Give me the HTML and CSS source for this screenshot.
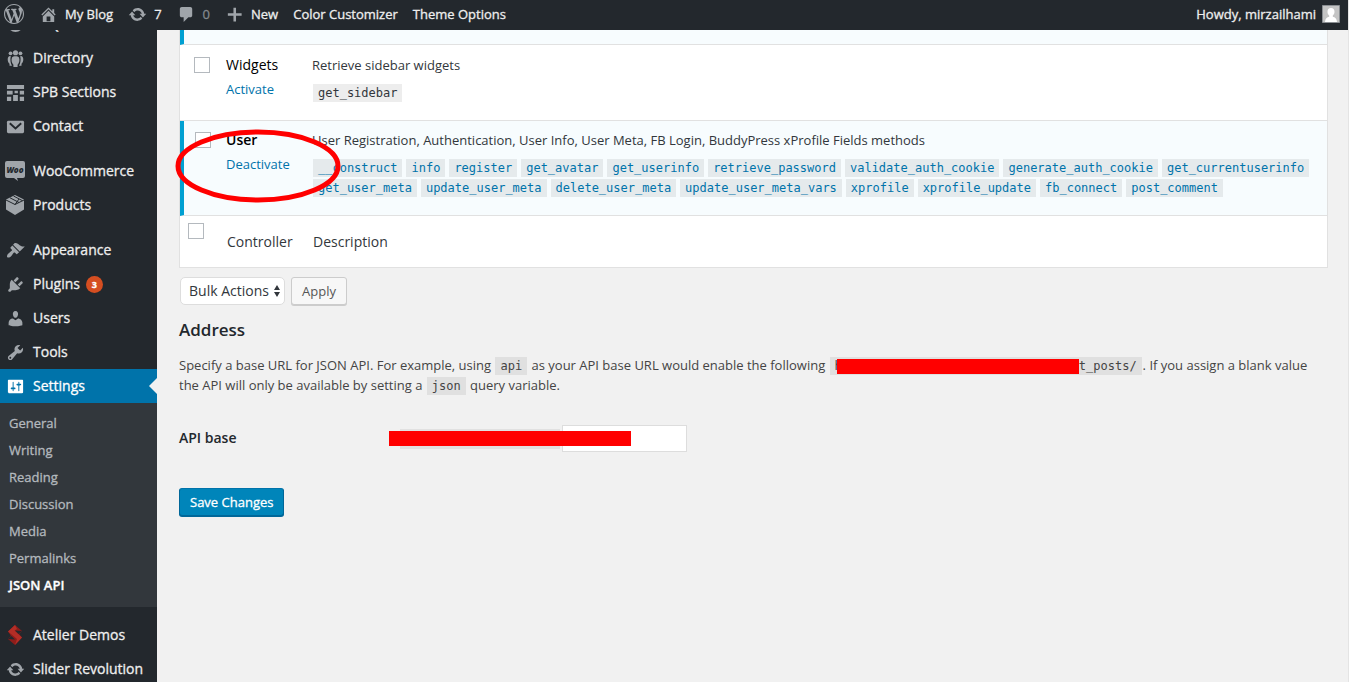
FILE: index.html
```html
<!DOCTYPE html>
<html lang="en">
<head>
<meta charset="utf-8">
<title>JSON API Settings</title>
<link rel="stylesheet" href="styles.css">
</head>
<body>
<header class="adminbar">
  <nav class="bar-left" aria-label="Toolbar">
    <a class="bar-logo" href="#" aria-label="About WordPress"><svg class="icon icon-lg" viewBox="0 0 20 20"><path d="M20 10c0-5.51-4.49-10-10-10C4.48 0 0 4.49 0 10c0 5.52 4.48 10 10 10 5.51 0 10-4.48 10-10zM7.78 15.37L4.37 6.22c.55-.02 1.17-.08 1.17-.08.5-.06.44-1.13-.06-1.11 0 0-1.45.11-2.37.11-.18 0-.37 0-.58-.01C4.12 2.69 6.87 1.11 10 1.11c2.33 0 4.45.87 6.05 2.34-.68-.11-1.65.39-1.65 1.58 0 .74.45 1.36.9 2.1.35.61.55 1.36.55 2.46 0 1.49-1.4 5-1.4 5l-3.03-8.37c.54-.02.82-.17.82-.17.5-.05.44-1.25-.06-1.22 0 0-1.44.12-2.38.12-.87 0-2.33-.12-2.33-.12-.5-.03-.56 1.2-.06 1.22l.92.08 1.26 3.41zM17.41 10c.24-.64.74-1.87.43-4.25.7 1.29 1.05 2.71 1.05 4.25 0 3.29-1.73 6.24-4.4 7.78.97-2.59 1.94-5.2 2.92-7.78zM6.1 18.09C3.12 16.65 1.11 13.53 1.11 10c0-1.3.23-2.48.72-3.59C3.25 10.3 4.67 14.2 6.1 18.09zm4.03-6.63l2.58 6.98c-.86.29-1.76.45-2.71.45-.79 0-1.57-.11-2.29-.33.81-2.38 1.62-4.74 2.42-7.1z"/></svg></a>
    <a class="bar-item" href="#"><svg class="icon" viewBox="0 0 20 20"><path d="M16 8.5l1.53 1.53-1.06 1.06L10 4.6l-6.47 6.49-1.06-1.06L10 2.5l4 4v-2h2v4zm-6-2.46l6 5.99V18H4v-5.97zM12 17v-5H8v5h4z"/></svg>My Blog</a>
    <a class="bar-item" href="#"><svg class="icon" viewBox="0 0 20 20"><path d="M10.2 3.28c3.53 0 6.43 2.61 6.92 6h2.08l-3.5 4-3.5-4h2.32c-.45-1.97-2.21-3.45-4.32-3.45-1.45 0-2.73.71-3.54 1.78L4.95 5.66C6.23 4.2 8.11 3.28 10.2 3.28zm-.4 13.44c-3.52 0-6.43-2.61-6.92-6H.8l3.5-4c1.17 1.33 2.33 2.67 3.5 4H5.48c.45 1.97 2.21 3.45 4.32 3.45 1.45 0 2.73-.71 3.54-1.78l1.71 1.95c-1.28 1.46-3.15 2.38-5.25 2.38z"/></svg>7</a>
    <a class="bar-item bar-muted" href="#"><svg class="icon" viewBox="0 0 20 20"><path d="M5 2h9c1.1 0 2 .9 2 2v7c0 1.1-.9 2-2 2h-2l-5 5v-5H5c-1.1 0-2-.9-2-2V4c0-1.1.9-2 2-2z"/></svg>0</a>
    <a class="bar-item" href="#"><svg class="icon" viewBox="0 0 20 20"><path d="M17.5 8.8v2.6h-5.9v5.9H8.900v-5.900H3V8.800h5.900V2.900h2.700v5.900z"/></svg>New</a>
    <a class="bar-item" href="#">Color Customizer</a>
    <a class="bar-item" href="#">Theme Options</a>
  </nav>
  <a class="bar-account" href="#">Howdy, mirzailhami
    <svg class="avatar" viewBox="0 0 18 18"><path fill="#c4c4c4" stroke="#8a8e92" d="M.5.5h17v17H.5z"/><path fill="#fff" d="M9 3c2.300 0 3.500 1.500 3.500 3.800 0 1.700-.7 3-1.700 3.800v1.200c2.200.4 4 1.700 4.200 5.200H3c.2-3.500 2-4.800 4.200-5.200v-1.200c-1-.8-1.700-2.100-1.700-3.800C5.500 4.500 6.700 3 9 3z"/></svg>
  </a>
</header>

<div class="layout">
  <nav class="sidebar" aria-label="Main menu">
    <ul class="menu">
      <li><a class="menu-link" href="#"><svg class="icon" viewBox="0 0 20 20"><circle cx="10" cy="10" r="8"/></svg>FAQs</a></li>
      <li><a class="menu-link" href="#"><svg class="icon" viewBox="0 0 20 20"><circle cx="10" cy="4" r="2.700"/><circle cx="4.800" cy="4.500" r="2"/><circle cx="15.200" cy="4.500" r="2"/><path d="M6.300 9C7.300 7 12.700 7 13.700 9c1 3 .2 6-1.500 7.500V19H7.800v-2.500C6.100 15 5.300 12 6.300 9zM5 7.500C3 7 1.800 8.500 1.800 11c0 2 .8 3.500 1.900 4.500V17.500H6.300C4.700 15 4.200 10.800 5 7.500zM15 7.500c2-.5 3.200 1 3.200 3.500 0 2-.8 3.500-1.900 4.500v2h-2.600c1.600-2.500 2.100-6.700 1.300-10z"/></svg>Directory</a></li>
      <li><a class="menu-link" href="#"><svg class="icon" viewBox="0 0 20 20"><path d="M1 2h18v4.200H1zM1 8.200h6v4H1zM9 8.200h3.500v2.500H9zM14.500 8.200H19v4h-4.500zM1 14.500h4.500V19H1zM7.500 12.700h5V19h-5zM14.500 14.500H19V19h-4.500z"/></svg>SPB Sections</a></li>
      <li><a class="menu-link" href="#"><svg class="icon" viewBox="0 0 20 20"><rect x="1" y="4" width="18" height="13" rx="1.500"/><path class="cut-line" stroke-width="2" d="M4 6.500l6 5.500 6-5.500"/></svg>Contact</a></li>
      <li class="group-start"><a class="menu-link" href="#"><svg class="icon icon-lg" viewBox="0 0 20 20"><path d="M2 0h16q2 0 2 2v13q0 2-2 2h-6l1 3-4-3H2q-2 0-2-2V2q0-2 2-2z"/><text class="woo-text" x="10" y="11.500" text-anchor="middle">Woo</text></svg>WooCommerce</a></li>
      <li><a class="menu-link" href="#"><svg class="icon icon-lg" viewBox="0 0 20 20"><path d="M10 0l9 4.500v10L10 20l-9-5.500v-10z"/><path class="cut-line" stroke-width="1" d="M1 5l9 4.500L19 5M5 2.800l9 4.700M8.500 1l9 4.700M10 9.500L14 4"/></svg>Products</a></li>
      <li class="group-start"><a class="menu-link" href="#"><svg class="icon" viewBox="0 0 20 20"><path d="M14.480 11.060L7.410 3.990l1.500-1.500c.5-.56 2.300-.47 3.510.32 1.210.8 1.430 1.280 2.910 2.100 1.180.64 2.450 1.260 4.450.85zm-.71.71L6.700 4.700 4.930 6.470c-.39.39-.39 1.020 0 1.410l1.060 1.060c.39.39.39 1.030 0 1.420-.6.6-1.430 1.110-2.210 1.690-.35.26-.7.53-1.010.84C1.430 14.230.4 16.080 1.400 17.070c.99 1 2.840-.03 4.180-1.360.31-.31.58-.66.85-1.020.57-.78 1.080-1.610 1.690-2.210.39-.39 1.020-.39 1.410 0l1.060 1.060c.39.39 1.020.39 1.410 0z"/></svg>Appearance</a></li>
      <li><a class="menu-link" href="#"><svg class="icon" viewBox="0 0 20 20"><path d="M13.110 4.360L9.870 7.600 8 5.730l3.240-3.240c.35-.34 1.050-.2 1.560.32.52.51.66 1.210.31 1.550zm-8 1.770l.91-1.120 9.010 9.010-1.190.84c-.71.71-2.630 1.160-3.820 1.160H6.140L4.900 17.260c-.59.59-1.540.59-2.120 0-.59-.58-.59-1.530 0-2.120l1.240-1.240v-3.880c0-1.130.4-3.190 1.090-3.890zm7.260 3.970l3.240-3.240c.34-.35 1.040-.21 1.550.31.52.51.66 1.210.31 1.550l-3.240 3.250z"/></svg>Plugins<span class="badge">3</span></a></li>
      <li><a class="menu-link" href="#"><svg class="icon" viewBox="0 0 20 20"><path d="M10 9.250c-2.270 0-2.730-3.440-2.730-3.440C7 4.020 7.820 2 9.970 2c2.160 0 2.980 2.020 2.710 3.810 0 0-.41 3.440-2.680 3.440zm0 2.570L12.720 10c2.390 0 4.520 2.330 4.520 4.530v2.490s-3.650 1.130-7.240 1.130c-3.650 0-7.240-1.130-7.240-1.130v-2.490c0-2.250 1.940-4.480 4.470-4.480z"/></svg>Users</a></li>
      <li><a class="menu-link" href="#"><svg class="icon" viewBox="0 0 20 20"><path d="M16.680 9.770c-1.340 1.340-3.300 1.670-4.950.99l-5.410 6.520c-.99.99-2.590.99-3.580 0s-.99-2.590 0-3.570l6.520-5.420c-.68-1.650-.35-3.610.99-4.950 1.280-1.280 3.120-1.620 4.720-1.060l-2.890 2.890 2.820 2.820 2.860-2.870c.53 1.580.18 3.390-1.080 4.650zM3.810 16.210c.4.39 1.040.39 1.430 0 .4-.4.4-1.040 0-1.430-.39-.4-1.030-.4-1.430 0-.39.39-.39 1.030 0 1.430z"/></svg>Tools</a></li>
      <li>
        <a class="menu-link current" href="#"><svg class="icon" viewBox="0 0 20 20"><path d="M18 16V4c0-.55-.45-1-1-1H3c-.55 0-1 .45-1 1v12c0 .55.45 1 1 1h14c.55 0 1-.45 1-1zM8 11h1c.55 0 1 .45 1 1s-.45 1-1 1H8v1.500c0 .28-.22.5-.5.5s-.5-.22-.5-.5V13H6c-.55 0-1-.45-1-1s.45-1 1-1h1V5.500c0-.28.22-.5.5-.5s.5.22.5.5V11zm5-2h-1c-.55 0-1-.45-1-1s.45-1 1-1h1V5.500c0-.28.22-.5.5-.5s.5.22.5.5V7h1c.55 0 1 .45 1 1s-.45 1-1 1h-1v5.500c0 .28-.22.5-.5.5s-.5-.22-.5-.5V9z"/></svg>Settings</a>
        <ul class="submenu">
          <li><a href="#">General</a></li>
          <li><a href="#">Writing</a></li>
          <li><a href="#">Reading</a></li>
          <li><a href="#">Discussion</a></li>
          <li><a href="#">Media</a></li>
          <li><a href="#">Permalinks</a></li>
          <li><a class="selected" href="#">JSON API</a></li>
        </ul>
      </li>
      <li class="group-start"><a class="menu-link" href="#"><svg class="icon icon-lg" viewBox="0 0 20 20"><path fill="#8c1d1a" d="M3 6.500L10 0l7 6-3 3 3 3.500L10 20l-7-6 3-3z"/><path fill="#b32d26" d="M10 0L3 6.500 12 14l-2 6 7-7.500-7.500-7L12 4z"/><path fill="#23282d" d="M10 5.500L17 6l-3.500 3zM10 14.500L3 14l3.500-3z"/></svg>Atelier Demos</a></li>
      <li><a class="menu-link" href="#"><svg class="icon" viewBox="0 0 20 20"><path d="M10.200 3.280c3.530 0 6.430 2.610 6.920 6h2.080l-3.500 4-3.500-4h2.320c-.45-1.970-2.210-3.450-4.320-3.450-1.450 0-2.730.71-3.540 1.780L4.950 5.660C6.230 4.200 8.110 3.280 10.200 3.280zm-.4 13.440c-3.520 0-6.430-2.610-6.920-6H.8l3.500-4c1.170 1.330 2.330 2.670 3.500 4H5.480c.45 1.970 2.210 3.450 4.320 3.450 1.450 0 2.730-.71 3.540-1.780l1.710 1.950c-1.280 1.460-3.150 2.380-5.250 2.380z"/></svg>Slider Revolution</a></li>
    </ul>
  </nav>

  <main class="content">
    <div class="table-wrap">
      <table class="controllers">
        <tbody>
          <tr class="active previous"><td class="check"></td><td class="name"></td><td></td></tr>
          <tr>
            <td class="check"><input type="checkbox" aria-label="Select Widgets"></td>
            <td class="name"><span class="title">Widgets</span><a href="#">Activate</a></td>
            <td class="desc"><p>Retrieve sidebar widgets</p><div class="methods"><code>get_sidebar</code></div></td>
          </tr>
          <tr class="active">
            <td class="check"><input type="checkbox" aria-label="Select User"></td>
            <td class="name"><strong class="title">User</strong><a href="#">Deactivate</a></td>
            <td class="desc"><p>User Registration, Authentication, User Info, User Meta, FB Login, BuddyPress xProfile Fields methods</p>
              <div class="methods"><a href="#"><code>__construct</code></a><a href="#"><code>info</code></a><a href="#"><code>register</code></a><a href="#"><code>get_avatar</code></a><a href="#"><code>get_userinfo</code></a><a href="#"><code>retrieve_password</code></a><a href="#"><code>validate_auth_cookie</code></a><a href="#"><code>generate_auth_cookie</code></a><a href="#"><code>get_currentuserinfo</code></a><a href="#"><code>get_user_meta</code></a><a href="#"><code>update_user_meta</code></a><a href="#"><code>delete_user_meta</code></a><a href="#"><code>update_user_meta_vars</code></a><a href="#"><code>xprofile</code></a><a href="#"><code>xprofile_update</code></a><a href="#"><code>fb_connect</code></a><a href="#"><code>post_comment</code></a></div></td>
          </tr>
        </tbody>
        <tfoot>
          <tr>
            <td class="check"><input type="checkbox" aria-label="Select all"></td>
            <th scope="col" class="name">Controller</th>
            <th scope="col" class="desc">Description</th>
          </tr>
        </tfoot>
      </table>
      <svg class="annotation" viewBox="0 0 166 74" aria-hidden="true"><ellipse cx="83" cy="37" rx="80" ry="34"/></svg>
    </div>

    <form class="settings">
      <div class="bulk">
        <span class="select-wrap">
          <select class="select" aria-label="Bulk action"><option>Bulk Actions</option></select>
          <svg class="select-arrows" viewBox="0 0 6 14" aria-hidden="true"><path d="M3 1l3 5H0zM3 13L0 8h6z"/></svg>
        </span>
        <button class="button" type="button">Apply</button>
      </div>
      <h2 class="heading">Address</h2>
      <p class="help">Specify a base URL for JSON API. For example, using <code>api</code> as your API base URL would enable the following <code>h<span class="redacted"></span>t_posts/</code>. If you assign a blank value the API will only be available by setting a <code>json</code> query variable.</p>
      <div class="field">
        <label class="field-label" for="api-base">API base</label>
        <div class="field-control">
          <span class="url-prefix"></span>
          <input class="text-input" id="api-base" type="text">
          <span class="redacted field-redacted"></span>
        </div>
      </div>
      <button class="button primary" type="submit">Save Changes</button>
    </form>
  </main>
</div>
</body>
</html>
```
FILE: styles.css
```css
* { box-sizing: border-box; }

body {
  margin: 0;
  height: 100vh;
  overflow: hidden;
  display: flex;
  flex-direction: column;
  border-right: 1px solid #e4e4e4;
  background: #f1f1f1;
  color: #444;
  font: 13px/20px "Open Sans", sans-serif;
}

a { color: #0073aa; text-decoration: none; }
ul { margin: 0; padding: 0; list-style: none; }
p { margin: 0; }

.icon { width: 19px; height: 19px; flex: none; fill: #a0a5aa; }
.icon-lg { width: 20px; height: 20px; }
.cut-line { fill: none; stroke: #23282d; }
.woo-text { fill: #23282d; font: italic 800 8px "Open Sans", sans-serif; }

/* Toolbar */
.adminbar {
  flex: none;
  height: 30px;
  display: flex;
  justify-content: space-between;
  align-items: center;
  padding-bottom: 2px;
  background: #23282d;
  -webkit-text-stroke: 0.3px;
}
.bar-left { display: flex; align-items: center; gap: 15px; }
.bar-logo { display: flex; margin-left: 4px; }
.bar-item { display: flex; align-items: center; gap: 7px; color: #eee; }
.bar-muted { color: #82878c; }
.bar-account { display: flex; align-items: center; gap: 6px; padding-right: 8px; color: #eee; }
.avatar { width: 18px; height: 18px; }

.layout { flex: 1; min-height: 0; display: flex; }

/* Side menu */
.sidebar {
  flex: none;
  width: 157px;
  overflow: hidden;
  background: #23282d;
  font-size: 14px;
  -webkit-text-stroke: 0.3px;
}
.menu { margin-top: -23px; }
.menu-link {
  position: relative;
  display: grid;
  grid-template-columns: 20px auto auto;
  justify-content: start;
  justify-items: center;
  align-items: center;
  gap: 8px;
  height: 34px;
  padding-left: 5px;
  color: #eee;
}
.group-start { margin-top: 11px; }
.current { background: #0073aa; color: #fff; }
.current .icon { fill: #fff; }
.current::after {
  content: "";
  position: absolute;
  top: 9px;
  right: 0;
  border: 8px solid transparent;
  border-left: 0;
  border-right-color: #f1f1f1;
}
.badge {
  min-width: 17px;
  height: 17px;
  margin-left: -2px;
  border-radius: 9px;
  background: #d54e21;
  color: #fff;
  font-size: 9px;
  font-weight: 700;
  line-height: 17px;
  text-align: center;
}
.submenu { padding: 7px 0 8px; background: #32373c; font-size: 13px; }
.submenu a { display: block; padding-left: 9px; color: #b4b9be; line-height: 27px; }
.submenu .selected { color: #fff; font-weight: 600; }

/* Page content */
.content { flex: 1; min-width: 0; padding: 0 20px 0 22px; }
.table-wrap { position: relative; }

.controllers {
  width: 100%;
  border-collapse: separate;
  border-spacing: 0;
  border: 1px solid #e1e1e1;
  border-top: 0;
  background: #fff;
  color: #32373c;
}
.controllers td, .controllers th { padding: 10px 0 0; vertical-align: top; text-align: left; font-weight: 400; }
.controllers tbody td { border-bottom: 1px solid #e1e1e1; }
.controllers tbody tr { height: 76px; }
.controllers .check { width: 46px; padding: 12px 0 0 14px; }
.controllers .name { width: 86px; }
.controllers .active { height: 95px; background: #f7fcfe; }
.controllers .active td { padding-top: 9px; }
.controllers .active .check { padding: 11px 0 0 11px; border-left: 4px solid #00a0d2; }
.controllers .previous { height: 15px; }
.controllers .previous td, .controllers .previous .check { padding: 0; }
.controllers .title { display: block; margin-bottom: 4px; color: #000; font-size: 14px; }
.controllers strong.title { font-weight: 600; }
.controllers .name a { display: block; }
.controllers tfoot tr { height: 51px; }
.controllers tfoot .check { padding: 7px 0 0 8px; }
.controllers tfoot th { padding: 16px 0 0 1px; font-size: 14px; }

input[type="checkbox"] {
  appearance: none;
  display: block;
  width: 16px;
  height: 16px;
  margin: 0;
  border: 1px solid #b4b9be;
  background: #fff;
}

code {
  padding: 2px 5px;
  background: rgba(0, 0, 0, 0.07);
  font: 12px/14px "DejaVu Sans Mono", monospace;
}
.methods { display: flex; flex-wrap: wrap; gap: 2px 4px; margin: 9px 0 0 1px; }
.methods code { display: block; }

.annotation {
  position: absolute;
  top: 99px;
  left: -4px;
  width: 166px;
  height: 74px;
  fill: none;
  stroke: #f00;
  stroke-width: 5px;
}

/* Settings form */
.bulk { display: flex; gap: 6px; margin: 9px 0 0 1px; }
.select-wrap { position: relative; display: flex; }
.select {
  appearance: none;
  width: 105px;
  height: 28px;
  padding: 0 8px 2px;
  border: 1px solid #ddd;
  border-radius: 5px;
  background: #fff;
  color: #32373c;
  font: 14px "Open Sans", sans-serif;
}
.select-arrows { position: absolute; top: 7px; right: 5px; width: 6px; height: 14px; fill: #32373c; pointer-events: none; }
.button {
  height: 28px;
  padding: 0 10px;
  border: 1px solid #ccc;
  border-radius: 3px;
  background: #f7f7f7;
  box-shadow: 0 1px 0 #ccc;
  color: #555;
  font: 13px "Open Sans", sans-serif;
}
.primary {
  border-color: #0073aa #006799 #006799;
  background: #0085ba;
  box-shadow: 0 1px 0 #006799;
  color: #fff;
  -webkit-text-stroke: 0.3px;
}
.heading { margin: 14px 0; color: #23282d; font-size: 17px; font-weight: 600; line-height: 22px; }
.help code { margin: 0 1px; }
.redacted { display: inline-block; width: 242px; height: 15px; background: #f00; vertical-align: middle; }
.help .redacted { margin-left: -5px; }
.field { display: flex; align-items: center; margin: 30px 0 36px; }
.field-label { width: 210px; padding-bottom: 2px; color: #23282d; font-size: 14px; font-weight: 600; }
.field-control { position: relative; display: flex; align-items: center; gap: 2px; }
.url-prefix { width: 171px; height: 20px; border-left: 11px solid #f1f1f1; background: #e1e1e1; }
.text-input { width: 125px; height: 27px; padding: 3px 5px; border: 1px solid #ddd; background: #fff; font: 14px "Open Sans", sans-serif; }
.field-redacted { position: absolute; top: 6px; left: 0; }
```
